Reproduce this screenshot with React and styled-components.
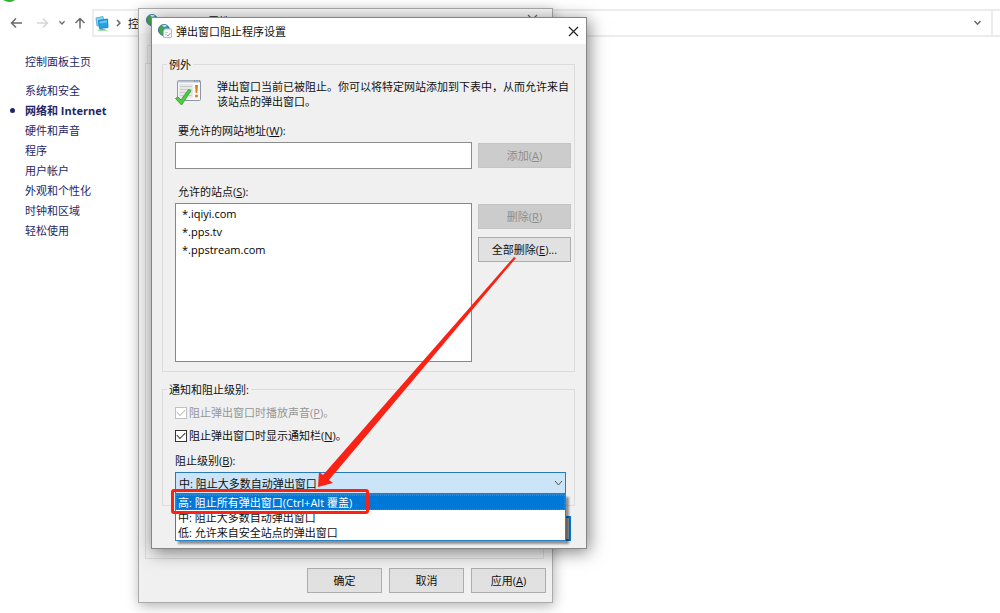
import React, { useState } from 'react';
import styled, { createGlobalStyle, css } from 'styled-components';

const GlobalStyle = createGlobalStyle`
  * {
    box-sizing: border-box;
  }

  body {
    margin: 0;
    background: #fff;
    color: #111;
    overflow: hidden;
  }

  body, button, input, select {
    font-family: "Open Sans", "Noto Sans CJK SC", sans-serif;
    font-size: 11px;
    line-height: 15px;
  }
`

const Desktop = styled.div`
  position: relative;
  min-height: 100vh;
`

const NavBar = styled.header`
  display: flex;
  align-items: center;
  height: 37px;
  padding-top: 9px;
`

const NavButtons = styled.nav`
  display: flex;
  align-items: center;
  gap: 7px;
  width: 92px;
  padding-left: 10px;
`

const IconButton = styled.button`
  display: flex;
  padding: 0;
  border: 0;
  background: none;
  color: ${props => props.$color || '#6a6a6a'};
`

const AddressBar = styled.div`
  display: flex;
  align-items: center;
  flex: 1;
  gap: 7px;
  height: 28px;
  padding: 0 9px 0 1px;
  border: 2px solid #ececec;
`

const Crumb = styled.span`
  flex: 1;
`

const SearchBox = styled.div`
  width: 7px;
  height: 28px;
  border: solid #ececec;
  border-width: 2px 0;
`

const CornerIcon = styled.svg`
  position: absolute;
  top: 0;
  left: 3px;
`

const Sidebar = styled.aside`
  padding: 15px 0 0 25px;
  color: #1f2766;
`

const NavLink = styled.a`
  display: block;
  position: relative;
  line-height: 20px;
  color: inherit;
  text-decoration: none;

  ${props => props.$home && css`
    margin-bottom: 9px;
  `}

  ${props => props.$active && css`
    font-weight: bold;

    &::before {
      content: '';
      position: absolute;
      top: 7px;
      left: -15px;
      width: 5px;
      height: 5px;
      border-radius: 50%;
      background: #1f2766;
    }
  `}
`

const Window = styled.section`
  position: absolute;
  display: flex;
  flex-direction: column;
  background: #f0f0f0;
`

const OptionsWindow = styled(Window)`
  top: 8px;
  left: 138px;
  width: 415px;
  height: 595px;
  border: 1px solid #aaa;
  box-shadow: 1px 3px 12px rgba(0, 0, 0, 0.3);
`

const BlockerWindow = styled(Window)`
  top: 17px;
  left: 151px;
  width: 436px;
  height: 532px;
  border: 1px solid #868686;
  box-shadow: 2px 3px 16px rgba(0, 0, 0, 0.5);
`

const TitleBar = styled.div`
  display: flex;
  align-items: center;
  gap: 4px;
  height: 26px;
  padding: 0 7px 0 6px;
  background: #fff;
`

const InactiveTitleBar = styled(TitleBar)`
  height: 24px;
  padding: 0 14px 0 7px;
  background: #f6f6f6;
`

const Title = styled.h1`
  flex: 1;
  margin: 0;
  font-size: 11px;
  line-height: 15px;
  font-weight: normal;
`

const WindowControls = styled.div`
  display: flex;
  gap: 32px;
`

const Tab = styled.div`
  width: 60px;
  height: 18px;
  margin: 12px 0 0 8px;
  border: 1px solid #dcdcdc;
  border-bottom: 0;
`

const TabPage = styled.div`
  flex: 1;
  margin: 0 8px 9px 6px;
  border: 1px solid #dcdcdc;
`

const Footer = styled.footer`
  display: flex;
  justify-content: flex-end;
  gap: 7px;
  padding: 0 6px 9px;
`

const Button = styled.button`
  height: 25px;
  padding: 0;
  border: 1px solid #adadad;
  background: #e1e1e1;
  color: #111;

  &:disabled {
    border-color: #c4c4c4;
    background: #ccc;
    color: #8e8e8e;
  }
`

const FooterButton = styled(Button)`
  width: 75px;
`

const CloseButton = styled(Button)`
  width: 76px;
  border: 2px solid #0078d7;
  background: #a9a9a9;
`

const WindowBody = styled.div`
  flex: 1;
  padding: 13px 11px 0 10px;
`

const Group = styled.fieldset`
  min-width: 0;
  margin: 0 0 10px;
  border: 1px solid #dcdcdc;
  padding: ${props => props.$padding};
`

const Legend = styled.legend`
  padding: 0 2px;
  margin-left: -8px;
`

const Intro = styled.div`
  display: flex;
  gap: 15px;
  padding-bottom: 14px;
`

const IntroText = styled.p`
  margin: 0;
  white-space: nowrap;
`

const Label = styled.label`
  display: block;
  padding-bottom: 4px;
  padding-left: ${props => props.$flush ? '0' : '3px'};
`

const Row = styled.div`
  display: flex;
  align-items: flex-start;
  gap: 6px;
  margin-bottom: ${props => props.$gap || '0'};
`

const Actions = styled.div`
  display: flex;
  flex-direction: column;
  gap: 8px;
  width: 93px;
  padding-top: 1px;
`

const TextBox = styled.input`
  flex: 1;
  min-width: 0;
  height: 27px;
  border: 1px solid #8c8c8c;
  background: #fff;
  padding: 0 6px;
`

const SiteList = styled.ul`
  flex: 1;
  height: 159px;
  margin: 0;
  padding: 1px 6px;
  border: 1px solid #828790;
  background: #fff;
  color: #000;
  list-style: none;
  line-height: 18px;
`

const CheckRow = styled.label`
  display: flex;
  align-items: center;
  gap: 2px;
  height: 23px;
  color: ${props => props.$disabled ? '#969696' : 'inherit'};
`

const CheckBox = styled.input`
  appearance: none;
  width: 12px;
  height: 12px;
  margin: 0;
  border: 1px solid #333;
  background: #fff;

  &:checked {
    display: grid;
    place-items: center;
  }

  &:checked::before {
    content: '';
    width: 7px;
    height: 4px;
    margin-bottom: 2px;
    border: solid #333;
    border-width: 0 0 1px 1px;
    transform: rotate(-45deg);
  }

  &:disabled, &:disabled::before {
    border-color: #c0c0c0;
  }
`

const LevelField = styled.div`
  padding-top: 6px;
`

const Combo = styled.div`
  position: relative;
  margin-right: 5px;
`

const Select = styled.select`
  appearance: none;
  display: block;
  width: 100%;
  height: 22px;
  padding: 0 3px;
  border: 1px solid #2a7ab9;
  border-radius: 0;
  background: #cce4f7;
  color: #111;
  outline: 0;
`

const ComboArrow = styled.svg`
  position: absolute;
  top: 8px;
  right: 3px;
  pointer-events: none;
`

const Menu = styled.ul`
  position: absolute;
  z-index: 1;
  top: 22px;
  left: 0;
  right: 0;
  margin: 0;
  padding: 0;
  border: 1px solid #2a82cc;
  background: #fff;
  box-shadow: 3px 3px 2px rgba(0, 0, 0, 0.4);
  list-style: none;
`

const MenuItem = styled.li`
  height: 15px;
  padding-left: 2px;
  white-space: nowrap;

  ${props => props.$selected && css`
    outline: 1px dotted #6a7c8c;
    outline-offset: -1px;
    background: #0078d7;
    color: #fff;
  `}
`

const Marker = styled.div`
  position: absolute;
  z-index: 2;
  top: 489px;
  left: 171px;
  width: 198px;
  height: 25px;
  border: 3px solid #fa2115;
  border-radius: 3px;
  pointer-events: none;
`

const Arrow = styled.svg`
  position: absolute;
  z-index: 2;
  top: 250px;
  left: 310px;
  pointer-events: none;
`

const WindowFooter = styled.div`
  display: flex;
  justify-content: flex-end;
  padding-right: 4px;
`

const links = [
  '系统和安全',
  '网络和 Internet',
  '硬件和声音',
  '程序',
  '用户帐户',
  '外观和个性化',
  '时钟和区域',
  '轻松使用',
]

const sites = ['*.iqiyi.com', '*.pps.tv', '*.ppstream.com']

const levels = [
  '高: 阻止所有弹出窗口(Ctrl+Alt 覆盖)',
  '中: 阻止大多数自动弹出窗口',
  '低: 允许来自安全站点的弹出窗口',
]

const Globe = () => (
  <svg width="14" height="14" viewBox="0 0 14 14" aria-hidden="true">
    <circle cx="6" cy="6" r="5.5" fill="#3f91c4" stroke="#316d91" />
    <path d="M1 5C2 2 4 1 6 1L5 3 7 4 5 6 6 8 4 11C2 10 1 8 1 5Z" fill="#49a349" />
    <path d="M4 1Q7 0 9 2L6 3Z" fill="#c7ebf5" />
    <path d="M7 5H13.5V13.5H5.5V7Z" fill="#f6f6f6" stroke="#b7c0c4" />
    <path d="M7 8.5H10M7 10.5H9" stroke="#c8d2d7" />
    <path d="M9 11L10 12 12.5 9" fill="none" stroke="#9ba7a3" />
  </svg>
)

const Chevron = ({ size = 7 }) => (
  <svg width={size} height="6" viewBox="0 0 7 6" fill="none" stroke="currentColor" strokeWidth="1.5" aria-hidden="true">
    <path d="M0.5 1L3.5 4.2 6.5 1" />
  </svg>
)

const Cross = () => (
  <svg width="11" height="11" viewBox="0 0 11 11" fill="none" stroke="currentColor" strokeWidth="1.2" aria-hidden="true">
    <path d="M1 1L10 10M10 1L1 10" />
  </svg>
)

const Computer = () => (
  <svg width="14" height="15" viewBox="0 0 14 15" aria-hidden="true">
    <path d="M1 2L8 0.5 9 9 2 10Z" fill="#8bd5f5" stroke="#5eb3dc" />
    <path d="M3.5 4.5L12.5 3 13 11.5 4.5 12.5Z" fill="#28a1e2" stroke="#1789c5" />
    <path d="M4.5 5.5L11.8 4.3 12 6.5 5 7.5Z" fill="#67c6f1" />
    <path d="M2 14.5Q7 11.500 12.500 14.500Z" fill="#4bbd4e" />
  </svg>
)

const AlertIcon = () => (
  <svg width="27" height="27" viewBox="0 0 27 27" aria-hidden="true">
    <rect x="2.5" y="1.5" width="23" height="20" rx="1" fill="#f8f9fa" stroke="#8e98a5" />
    <path d="M3 2.5H25" stroke="#b9c1cc" strokeWidth="2" />
    <path d="M19 2H20M21.5 2H22.5M24 2H25" stroke="#59657a" />
    <rect x="4" y="5" width="14" height="14" fill="#e6e7e8" />
    <path d="M5 7.5H17M5 10.5H17M5 13.5H17M5 16.5H17" stroke="#cacccf" />
    <path d="M20 6H23L22.3 14H20.7Z" fill="#e07b19" />
    <circle cx="21.5" cy="17" r="1.5" fill="#e07b19" />
    <path d="M0.5 19.5L3 18 6 21 13.5 10.500 16 11.500 6.500 26Z" fill="#50cd43" stroke="#36a530" />
  </svg>
)

const Key = ({ children }) => <>(<u>{children}</u>)</>

const App = () => {
  const [level, setLevel] = useState(levels[1]);
  const [notify, setNotify] = useState(true);

  return (
    <Desktop>
      <GlobalStyle />
      <CornerIcon width="13" height="3" aria-hidden="true">
        <path d="M0 0H12Q7 4 0 0Z" fill="#2eb22e" />
      </CornerIcon>
      <NavBar>
        <NavButtons>
          <IconButton aria-label="后退">
            <svg width="13" height="12" viewBox="0 0 13 12" fill="none" stroke="currentColor" strokeWidth="1.5"><path d="M12 6H2M6 1.5L1.5 6 6 10.5" /></svg>
          </IconButton>
          <IconButton aria-label="前进" $color="#d6d6d6">
            <svg width="22" height="12" viewBox="0 0 22 12" fill="none" stroke="currentColor" strokeWidth="1.5"><path d="M7 6H17M13 1.5L17.500 6 13 10.5" /></svg>
          </IconButton>
          <IconButton aria-label="最近"><Chevron size={6} /></IconButton>
          <IconButton aria-label="向上">
            <svg width="14" height="12" viewBox="0 0 14 12" fill="none" stroke="currentColor" strokeWidth="1.5"><path d="M8 11.5V1.5M3.5 6L8 1.5 12.500 6" /></svg>
          </IconButton>
        </NavButtons>
        <AddressBar>
          <Computer />
          <svg width="5" height="8" fill="none" stroke="#666" strokeWidth="1.5" aria-hidden="true"><path d="M1 1L4 4 1 7" /></svg>
          <Crumb>控</Crumb>
          <IconButton aria-label="展开"><Chevron size={9} /></IconButton>
        </AddressBar>
        <SearchBox />
      </NavBar>
      <Sidebar>
        <NavLink href="#home" $home>控制面板主页</NavLink>
        {links.map(link => (
          <NavLink key={link} href="#category" $active={link === links[1]}>{link}</NavLink>
        ))}
      </Sidebar>

      <OptionsWindow>
        <InactiveTitleBar>
          <Globe />
          <Title>Internet 属性</Title>
          <WindowControls>
            <IconButton aria-label="帮助">?</IconButton>
            <IconButton aria-label="关闭属性"><Cross /></IconButton>
          </WindowControls>
        </InactiveTitleBar>
        <Tab />
        <TabPage />
        <Footer>
          <FooterButton>确定</FooterButton>
          <FooterButton>取消</FooterButton>
          <FooterButton>应用<Key>A</Key></FooterButton>
        </Footer>
      </OptionsWindow>

      <BlockerWindow>
        <TitleBar>
          <Globe />
          <Title>弹出窗口阻止程序设置</Title>
          <IconButton aria-label="关闭窗口" $color="#222"><Cross /></IconButton>
        </TitleBar>
        <WindowBody>
          <Group $padding="7px 3px 9px 12px">
            <Legend>例外</Legend>
            <Intro>
              <AlertIcon />
              <IntroText>
                弹出窗口当前已被阻止。你可以将特定网站添加到下表中，从而允许来自<br />
                该站点的弹出窗口。
              </IntroText>
            </Intro>
            <Label htmlFor="site">要允许的网站地址<Key>W</Key>:</Label>
            <Row $gap="15px">
              <TextBox id="site" />
              <Actions>
                <Button disabled>添加<Key>A</Key></Button>
              </Actions>
            </Row>
            <Label as="div" id="allowed">允许的站点<Key>S</Key>:</Label>
            <Row>
              <SiteList aria-labelledby="allowed">
                {sites.map(site => <li key={site}>{site}</li>)}
              </SiteList>
              <Actions>
                <Button disabled>删除<Key>R</Key></Button>
                <Button>全部删除<Key>E</Key>...</Button>
              </Actions>
            </Row>
          </Group>
          <Group $padding="4px 3px 11px 12px">
            <Legend>通知和阻止级别:</Legend>
            <CheckRow $disabled>
              <CheckBox type="checkbox" defaultChecked disabled />
              <span>阻止弹出窗口时播放声音<Key>P</Key>。</span>
            </CheckRow>
            <CheckRow>
              <CheckBox type="checkbox" checked={notify} onChange={e => setNotify(e.target.checked)} />
              <span>阻止弹出窗口时显示通知栏<Key>N</Key>。</span>
            </CheckRow>
            <LevelField>
              <Label htmlFor="level" $flush>阻止级别<Key>B</Key>:</Label>
              <Combo>
                <Select id="level" value={level} onChange={e => setLevel(e.target.value)}>
                  {levels.map(item => <option key={item}>{item}</option>)}
                </Select>
                <ComboArrow width="9" height="7" fill="none" stroke="#555"><path d="M1 1L4.5 5 8 1" /></ComboArrow>
                <Menu>
                  {levels.map((item, i) => (
                    <MenuItem key={item} $selected={i === 0}>{item}</MenuItem>
                  ))}
                </Menu>
              </Combo>
            </LevelField>
          </Group>
          <WindowFooter>
            <CloseButton aria-label="关闭" />
          </WindowFooter>
        </WindowBody>
      </BlockerWindow>

      <Marker />
      <Arrow width="210" height="240" aria-hidden="true">
        <path d="M204 7L13 225 9 222 8 237 23 233 19 230 206 8Z" fill="#fa2115" />
      </Arrow>
    </Desktop>
  );
};

export default App;
